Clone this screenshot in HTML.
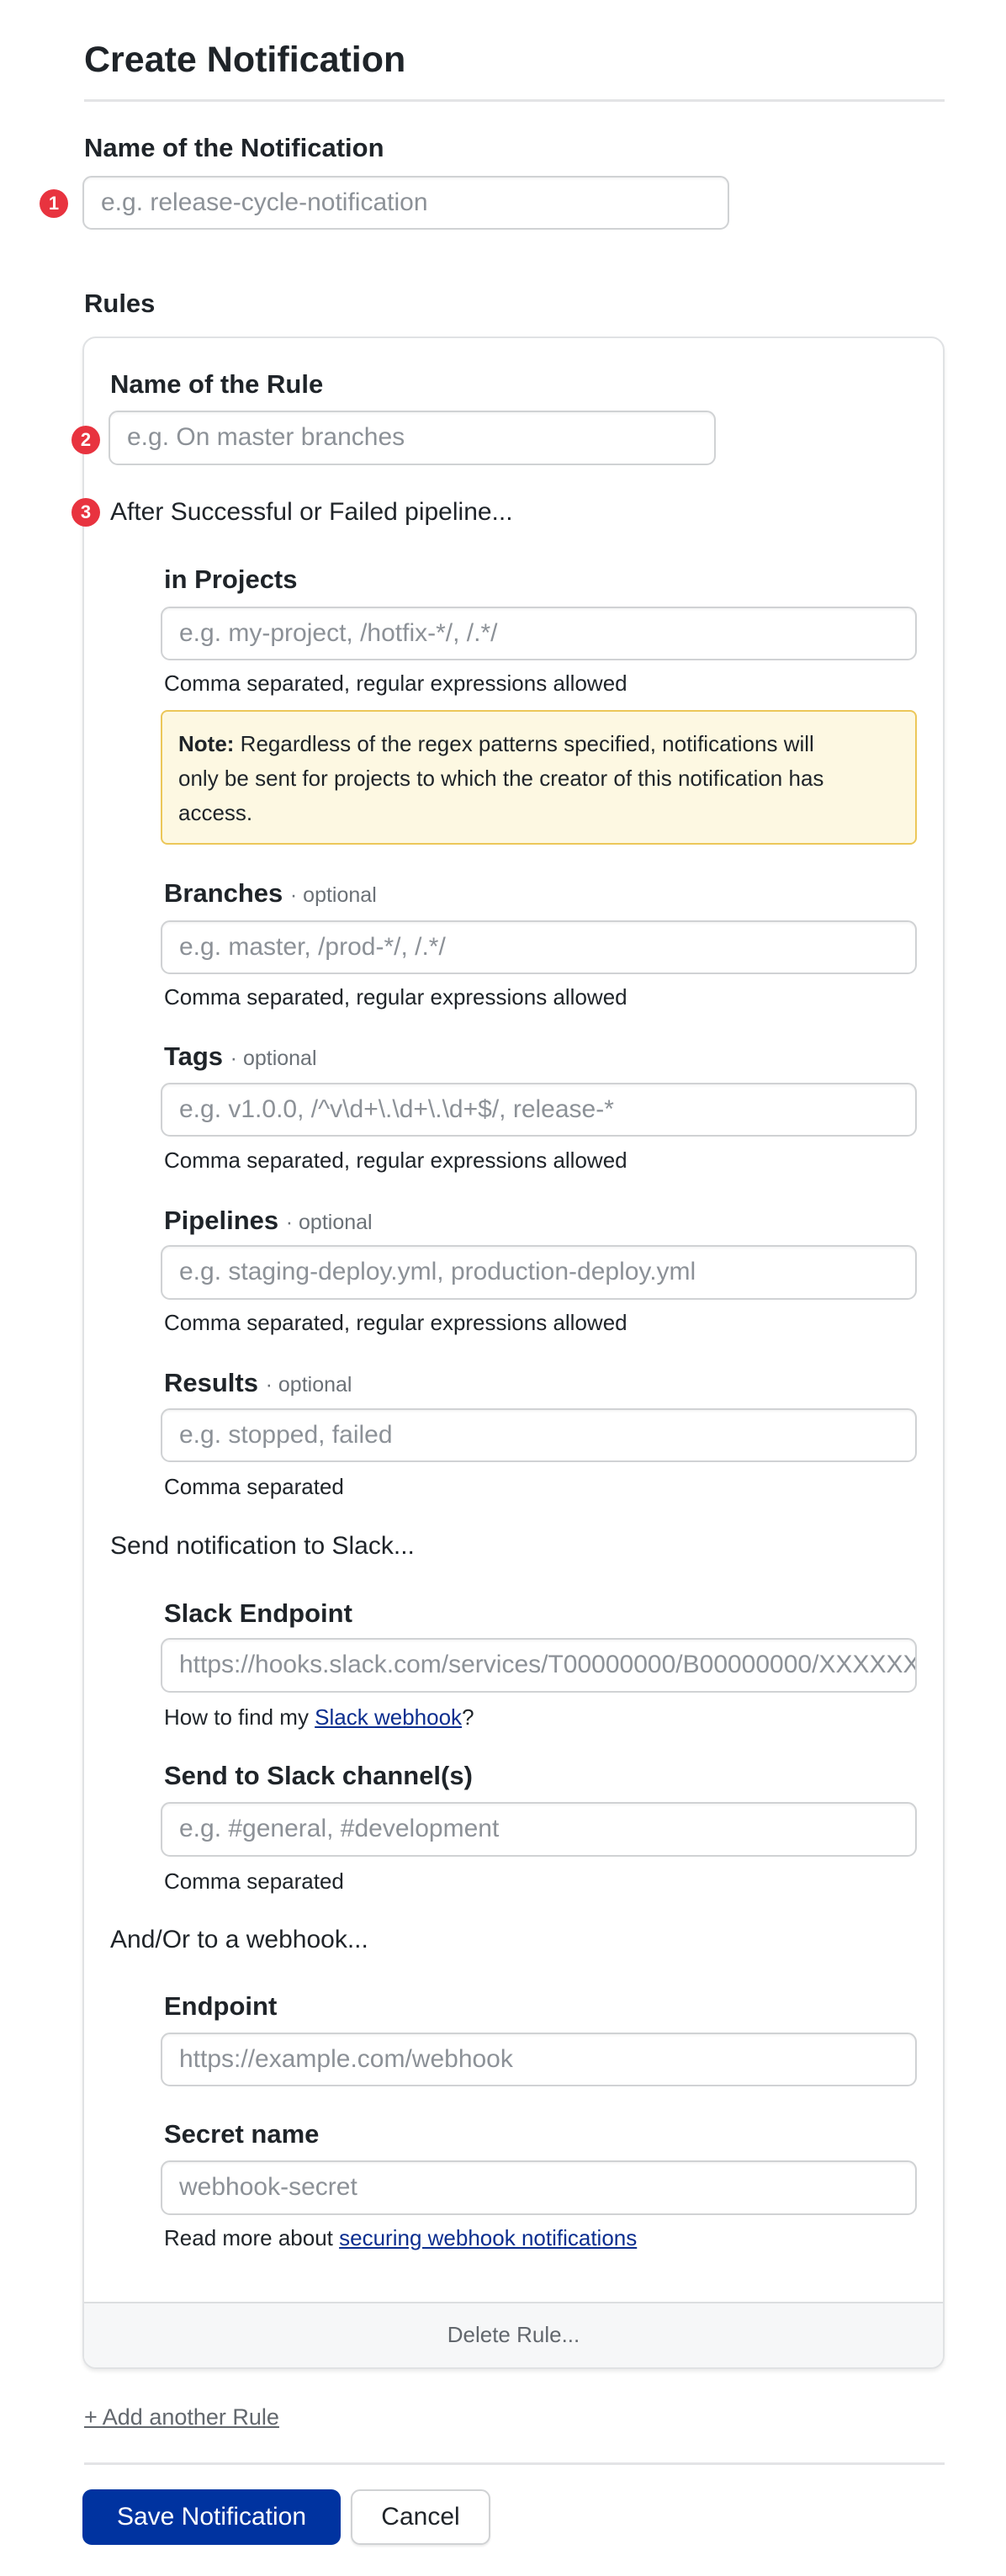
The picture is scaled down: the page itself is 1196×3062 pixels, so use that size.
<!DOCTYPE html>
<html><head><meta charset="utf-8"><style>
*{box-sizing:border-box;margin:0;padding:0}
body{width:1196px;height:3062px;background:#fff;font-family:"Liberation Sans",sans-serif;color:#1f2429;position:relative;overflow:hidden}
.a{position:absolute;white-space:nowrap;line-height:40px;height:40px}
.lbl{font-weight:bold;font-size:31px}
.body{font-size:30px}
.help{font-size:26px}
.opt{font-weight:normal;font-size:25px;color:#6b7177}
.in{position:absolute;border:2px solid #d0d2d4;border-radius:11px;background:#fff;font-size:30px;color:#8c9197;padding-left:20px;line-height:60px;white-space:nowrap;overflow:hidden;box-shadow:inset 0 2px 2px rgba(0,0,0,.04)}
.hr{position:absolute;left:100px;width:1023px;height:3px;background:#e3e4e6}
.badge{position:absolute;width:34px;height:34px;border-radius:50%;background:#e8333f;color:#fff;font-weight:bold;font-size:22px;text-align:center;line-height:34px}
a{color:#0b2e8f;text-decoration:underline}
</style></head><body>
<div class="a" style="left:100px;top:46px;font-size:43px;font-weight:bold;height:50px;line-height:50px">Create Notification</div>
<div class="hr" style="top:118px"></div>

<div class="a lbl" style="left:100px;top:156px">Name of the Notification</div>
<div class="badge" style="left:47px;top:225px">1</div>
<div class="in" style="left:98px;top:209px;width:769px;height:64px">e.g. release-cycle-notification</div>

<div class="a lbl" style="left:100px;top:341px">Rules</div>

<div style="position:absolute;left:98px;top:400px;width:1025px;height:2416px;border:2px solid #e0e2e4;border-radius:16px;overflow:hidden;box-shadow:0 3px 4px rgba(0,0,0,.08)">
  <div style="position:absolute;left:0;right:0;bottom:0;height:78px;background:#f6f7f8;border-top:2px solid #dcdee0;text-align:center;font-size:26px;color:#62676d;line-height:74px">Delete Rule...</div>
</div>

<div class="a lbl" style="left:131px;top:437px">Name of the Rule</div>
<div class="badge" style="left:85px;top:506px">2</div>
<div class="in" style="left:129px;top:488px;width:722px;height:65px">e.g. On master branches</div>

<div class="badge" style="left:85px;top:592px">3</div>
<div class="a body" style="left:131px;top:589px">After Successful or Failed pipeline...</div>

<div class="a lbl" style="left:195px;top:669px">in Projects</div>
<div class="in" style="left:191px;top:721px;width:899px;height:64px">e.g. my-project, /hotfix-*/, /.*/</div>
<div class="a help" style="left:195px;top:792px">Comma separated, regular expressions allowed</div>

<div style="position:absolute;left:191px;top:844px;width:899px;height:160px;background:#fdf8e2;border:2px solid #ecc759;border-radius:8px;padding:18px 100px 0 19px;font-size:26px;line-height:41px;color:#1f2429">
<b>Note:</b> Regardless of the regex patterns specified, notifications will only be sent for projects to which the creator of this notification has access.</div>

<div class="a lbl" style="left:195px;top:1042px">Branches <span class="opt">· optional</span></div>
<div class="in" style="left:191px;top:1094px;width:899px;height:64px">e.g. master, /prod-*/, /.*/</div>
<div class="a help" style="left:195px;top:1165px">Comma separated, regular expressions allowed</div>

<div class="a lbl" style="left:195px;top:1236px">Tags <span class="opt">· optional</span></div>
<div class="in" style="left:191px;top:1287px;width:899px;height:64px">e.g. v1.0.0, /^v\d+\.\d+\.\d+$/, release-*</div>
<div class="a help" style="left:195px;top:1359px">Comma separated, regular expressions allowed</div>

<div class="a lbl" style="left:195px;top:1431px">Pipelines <span class="opt">· optional</span></div>
<div class="in" style="left:191px;top:1480px;width:899px;height:65px">e.g. staging-deploy.yml, production-deploy.yml</div>
<div class="a help" style="left:195px;top:1552px">Comma separated, regular expressions allowed</div>

<div class="a lbl" style="left:195px;top:1624px">Results <span class="opt">· optional</span></div>
<div class="in" style="left:191px;top:1674px;width:899px;height:64px">e.g. stopped, failed</div>
<div class="a help" style="left:195px;top:1747px">Comma separated</div>

<div class="a body" style="left:131px;top:1818px">Send notification to Slack...</div>

<div class="a lbl" style="left:195px;top:1898px">Slack Endpoint</div>
<div class="in" style="left:191px;top:1947px;width:899px;height:65px">https://hooks.slack.com/services/T00000000/B00000000/XXXXXXXXXXXXXXXXXXXXXXXX</div>
<div class="a help" style="left:195px;top:2021px">How to find my <a>Slack webhook</a>?</div>

<div class="a lbl" style="left:195px;top:2091px">Send to Slack channel(s)</div>
<div class="in" style="left:191px;top:2142px;width:899px;height:65px">e.g. #general, #development</div>
<div class="a help" style="left:195px;top:2216px">Comma separated</div>

<div class="a body" style="left:131px;top:2286px">And/Or to a webhook...</div>

<div class="a lbl" style="left:195px;top:2365px">Endpoint</div>
<div class="in" style="left:191px;top:2416px;width:899px;height:64px">https://example.com/webhook</div>

<div class="a lbl" style="left:195px;top:2517px">Secret name</div>
<div class="in" style="left:191px;top:2568px;width:899px;height:65px">webhook-secret</div>
<div class="a help" style="left:195px;top:2640px">Read more about <a>securing webhook notifications</a></div>

<div class="a help" style="left:100px;top:2853px;color:#62676d;text-decoration:underline;font-size:27px">+ Add another Rule</div>
<div class="hr" style="top:2927px"></div>

<div style="position:absolute;left:98px;top:2959px;width:307px;height:66px;background:#0033a0;border-radius:11px;color:#fff;font-size:30px;text-align:center;line-height:66px">Save Notification</div>
<div style="position:absolute;left:417px;top:2959px;width:166px;height:66px;background:#fff;border:2px solid #d0d2d4;border-radius:11px;color:#1f2429;font-size:30px;text-align:center;line-height:62px;box-shadow:0 2px 2px rgba(0,0,0,.08)">Cancel</div>
</body></html>
